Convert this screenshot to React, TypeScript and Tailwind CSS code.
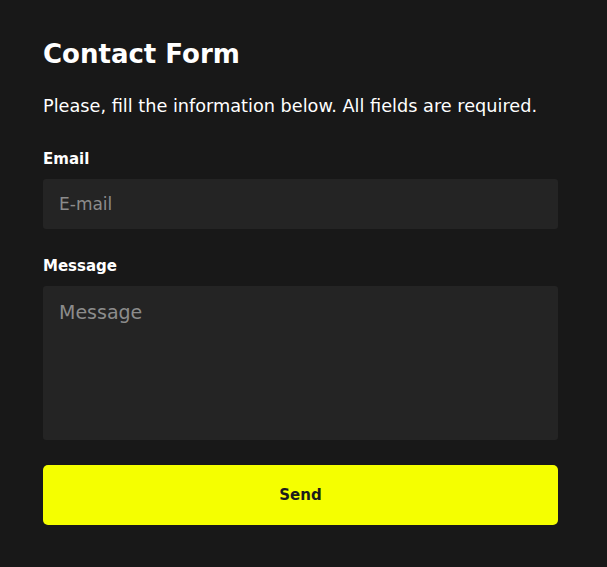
export default function App() {
  return (
    <div
      className="min-h-screen w-full bg-[#181818] text-white"
      style={{ fontFamily: '"DejaVu Sans", "Noto Sans", sans-serif' }}
    >
      <div className="w-[515px] ml-[43px] pt-[36px]">
        <h1 className="text-[26px] leading-[36px] font-bold">Contact Form</h1>
        <p className="mt-[20px] text-[17.7px] leading-[28px]">
          Please, fill the information below. All fields are required.
        </p>
        <form className="mt-[27px] flex flex-col">
          <label className="text-[15px] leading-[24px] font-bold">Email</label>
          <input
            type="email"
            placeholder="E-mail"
            className="mt-[8px] h-[50px] rounded-[3px] bg-[#242424] px-[16px] text-[17px] text-white placeholder:text-[#8c8c8c] outline-none"
          />
          <label className="mt-[25px] text-[15px] leading-[24px] font-bold">Message</label>
          <textarea
            placeholder="Message"
            className="mt-[8px] h-[154px] resize-none rounded-[3px] bg-[#242424] px-[16px] py-[12px] text-[19px] text-white placeholder:text-[#8c8c8c] outline-none"
          />
          <button
            type="submit"
            className="mt-[25px] h-[60px] rounded-[5px] bg-[#f5ff00] text-[15px] font-bold text-[#1c1c1c]"
          >
            Send
          </button>
        </form>
      </div>
    </div>
  );
}
